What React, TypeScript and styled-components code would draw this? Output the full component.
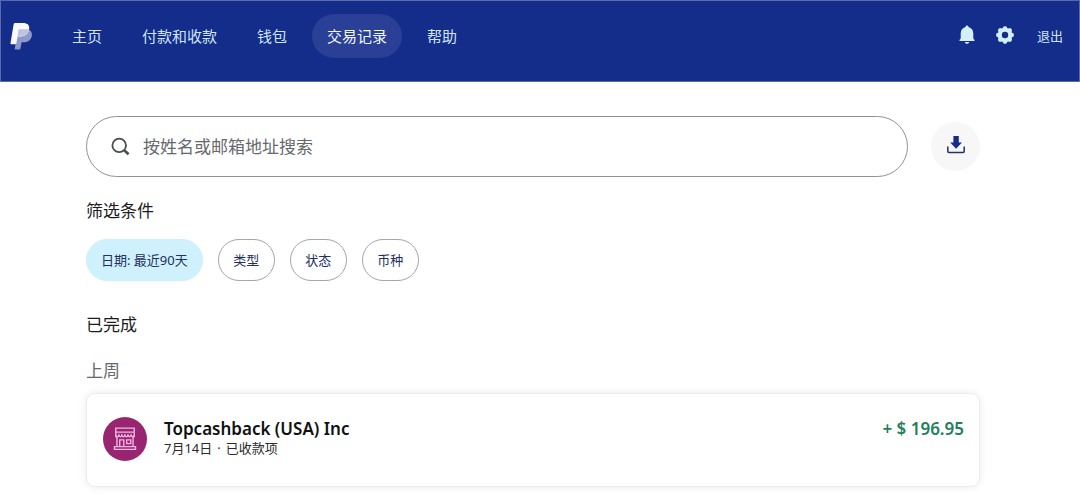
import React from "react";
import styled, { createGlobalStyle } from "styled-components";

const GlobalStyle = createGlobalStyle`
  *, *::before, *::after { box-sizing: border-box; }
  body {
    margin: 0;
    background: #fff;
    color: #1c1c1e;
    font-family: "Noto Sans", "Noto Sans CJK SC", sans-serif;
    font-size: 17px;
  }
  button, input { font: inherit; }
`;

const Header = styled.header`
  display: flex;
  align-items: flex-start;
  justify-content: space-between;
  height: 82px;
  padding: 13px 16px 0 9px;
  background: #142c8a;
  border: 1px solid #5a69aa;
`;

const HeaderGroup = styled.div`
  display: flex;
  align-items: center;
  height: 44px;
`;

const LogoLink = styled.a`
  display: flex;
  margin-right: 24px;
`;

const Nav = styled.nav`
  display: flex;
  gap: 10px;
`;

const NavLink = styled.a<{ $active?: boolean }>`
  padding: 0 15px;
  border-radius: 22px;
  background: ${(p) => (p.$active ? "#2a3f96" : "transparent")};
  color: ${(p) => (p.$active ? "#f2f8f4" : "#cfe6f6")};
  font-size: 15px;
  line-height: 44px;
  text-decoration: none;
  white-space: nowrap;
`;

const Actions = styled.div`
  display: flex;
  gap: 20px;
  margin-right: 23px;
  padding-bottom: 2px;
`;

const IconButton = styled.button`
  display: flex;
  align-items: center;
  padding: 0;
  border: 0;
  background: none;
  color: #d3effc;
  cursor: pointer;
`;

const LogoutLink = styled.a`
  color: #cfe6f6;
  font-size: 13px;
  line-height: 44px;
  text-decoration: none;
`;

const Main = styled.main`
  padding: 34px 100px 16px 86px;
`;

const SearchRow = styled.form`
  display: flex;
  align-items: center;
  gap: 23px;
`;

const SearchBox = styled.label`
  display: flex;
  flex: 1;
  align-items: center;
  gap: 12px;
  height: 61px;
  padding: 0 24px;
  border: 1px solid #909294;
  border-radius: 31px;
  color: #4a4d50;
`;

const SearchInput = styled.input`
  flex: 1;
  min-width: 0;
  padding: 0;
  border: 0;
  outline: 0;
  background: none;
  color: #333;
  font-size: 17px;
  &::placeholder { color: #66696c; opacity: 1; }
`;

const DownloadButton = styled.button`
  display: flex;
  align-items: center;
  justify-content: center;
  width: 49px;
  height: 49px;
  padding: 0 0 4px;
  border: 0;
  border-radius: 50%;
  background: #f7f7f8;
  color: #142c8a;
  cursor: pointer;
`;

const SectionTitle = styled.h2<{ $muted?: boolean }>`
  margin: 0;
  color: ${(p) => (p.$muted ? "#66696c" : "#1c1c1e")};
  font-size: 17px;
  font-weight: 400;
  line-height: 26px;
`;

const Filters = styled.section`
  padding-top: 21px;
`;

const Chips = styled.div`
  display: flex;
  gap: 15px;
  padding-top: 15px;
`;

const Chip = styled.button<{ $selected?: boolean }>`
  min-width: 57px;
  height: 42px;
  padding: 0 14px 2px;
  border: 1px solid ${(p) => (p.$selected ? "#cff0fd" : "#a3a6a9")};
  border-radius: 21px;
  background: ${(p) => (p.$selected ? "#cff0fd" : "#fff")};
  color: #23305c;
  font-size: 13px;
  white-space: nowrap;
  cursor: pointer;
`;

const Activity = styled.section`
  display: flex;
  flex-direction: column;
  gap: 20px;
  padding-top: 31px;
`;

const Card = styled.article`
  display: flex;
  gap: 17px;
  height: 94px;
  margin-top: -11px;
  padding: 23px 15px 0 16px;
  border: 1px solid #ececee;
  border-radius: 9px;
  box-shadow: 0 0 8px rgba(0, 0, 0, 0.08);
`;

const Avatar = styled.div`
  display: flex;
  align-items: center;
  justify-content: center;
  width: 44px;
  height: 44px;
  border-radius: 50%;
  background: #98256f;
`;

const Details = styled.div`
  flex: 1;
`;

const Name = styled.h3`
  margin: 0;
  color: #111;
  font-size: 17px;
  font-weight: 600;
  line-height: 23px;
`;

const Meta = styled.p`
  display: flex;
  gap: 5px;
  margin: 0;
  color: #2a2a2c;
  font-size: 13px;
  line-height: 17px;
`;

const Amount = styled.strong`
  color: #24805c;
  font-size: 17px;
  font-weight: 600;
  line-height: 23px;
`;

const Logo = () => (
  <svg width="23" height="28" viewBox="0 0 23 28" aria-hidden="true">
    <path d="M8.4 7.2h8.2c4 .3 6 3.2 5.200 6.800-.9 4.400-4 6.300-8 6.300h-2.200l-1.200 6.500q-.2.800-1 .8H5.300q-.8 0-.6-.8z" fill="#8d98cb" />
    <path d="M3.600 2.400Q3.800 1 5 1h7.900c4.600 0 7 2.200 6.200 6.400-.9 4.900-4.200 7-8.700 7H7.600l-1.200 6.900q-.1.900-.9.900H1.200q-.9 0-.7-.9z" fill="#f8faff" />
    <path d="M8.600 7.200h10.500c-.9 4.900-4.200 7-8.700 7H7.500z" fill="#bcc4e2" />
  </svg>
);

const Bell = () => (
  <svg width="18" height="20" viewBox="0 0 18 20" fill="currentColor" aria-hidden="true">
    <path d="M9 .6c.8 0 1.400.6 1.500 1.400 3 .8 4.800 3.300 4.800 6.500v4.600c0 .9.400 1.300 1.200 1.700v1.100h-15v-1.100c.8-.4 1.200-.8 1.200-1.700V8.500c0-3.200 1.800-5.700 4.800-6.500C7.600 1.200 8.200.6 9 .6zM6.800 17h4.400c-.2 1.100-1 1.800-2.200 1.800S7 18.100 6.800 17z" />
  </svg>
);

const Gear = () => (
  <svg width="18" height="18" viewBox="0 0 18 18" aria-hidden="true">
    <g fill="currentColor">
      <circle cx="9" cy="9" r="7.300" />
      {[0, 45, 90, 135, 180, 225, 270, 315].map((a) => (
        <path key={a} d="M6.500 2.500 7.600.4q1.400-.5 2.800 0l1.100 2.100z" transform={`rotate(${a} 9 9)`} />
      ))}
    </g>
    <circle cx="9" cy="9" r="3.200" fill="#142c8a" />
  </svg>
);

const SearchIcon = () => (
  <svg width="20" height="20" viewBox="0 0 20 20" fill="none" stroke="currentColor" aria-hidden="true">
    <circle cx="8.200" cy="8.400" r="6.800" strokeWidth="1.800" />
    <path d="m13.200 13.200 4.400 4.100" strokeWidth="2.600" />
  </svg>
);

const DownloadIcon = () => (
  <svg width="20" height="20" viewBox="0 0 20 20" aria-hidden="true">
    <path d="M7.400 1h5.400v6.500H16l-5.900 6.200-5.900-6.200h3.200z" fill="currentColor" />
    <path d="M1.800 11.600v4.700q0 1.200 1.200 1.200h14q1.200 0 1.200-1.200v-4.700" fill="none" stroke="#26305f" strokeWidth="1.500" />
  </svg>
);

const StoreIcon = () => (
  <svg width="24" height="24" viewBox="0 0 26 26" fill="none" stroke="#f3b4e6" strokeWidth="1.500" aria-hidden="true">
    <path d="M3 1.200h20v4.300H3zM3 5.500v5.500M23 5.500v5.500M4.300 10.500v10.700M21.700 10.500v10.700M1.600 21.200h22.800v3H1.600zM7.300 21.200v-7.200h4.400v7.200M14.800 14h4.400v4h-4.400z" />
    <path d="M3 8.700q1.700 4 3.400 0 1.600 4 3.300 0 1.600 4 3.300 0 1.700 4 3.300 0 1.700 4 3.300 0 1.700 4 3.400 0" />
  </svg>
);

const navItems = ["主页", "付款和收款", "钱包", "交易记录", "帮助"];
const filterItems = ["日期: 最近90天", "类型", "状态", "币种"];

export default function App() {
  return (
    <div lang="zh-CN">
      <GlobalStyle />
      <Header>
        <HeaderGroup>
          <LogoLink href="#" aria-label="PayPal">
            <Logo />
          </LogoLink>
          <Nav>
            {navItems.map((item) => (
              <NavLink key={item} href="#" $active={item === "交易记录"}>
                {item}
              </NavLink>
            ))}
          </Nav>
        </HeaderGroup>
        <HeaderGroup>
          <Actions>
            <IconButton type="button" aria-label="通知">
              <Bell />
            </IconButton>
            <IconButton type="button" aria-label="设置">
              <Gear />
            </IconButton>
          </Actions>
          <LogoutLink href="#">退出</LogoutLink>
        </HeaderGroup>
      </Header>
      <Main>
        <SearchRow onSubmit={(e) => e.preventDefault()}>
          <SearchBox>
            <SearchIcon />
            <SearchInput type="text" aria-label="搜索" placeholder="按姓名或邮箱地址搜索" />
          </SearchBox>
          <DownloadButton type="button" aria-label="下载">
            <DownloadIcon />
          </DownloadButton>
        </SearchRow>
        <Filters>
          <SectionTitle>筛选条件</SectionTitle>
          <Chips>
            {filterItems.map((item, i) => (
              <Chip key={item} type="button" $selected={i === 0}>
                {item}
              </Chip>
            ))}
          </Chips>
        </Filters>
        <Activity>
          <SectionTitle>已完成</SectionTitle>
          <SectionTitle $muted>上周</SectionTitle>
          <Card>
            <Avatar>
              <StoreIcon />
            </Avatar>
            <Details>
              <Name>Topcashback (USA) Inc</Name>
              <Meta>
                <span>7月14日</span>
                <span>·</span>
                <span>已收款项</span>
              </Meta>
            </Details>
            <Amount>+ $ 196.95</Amount>
          </Card>
        </Activity>
      </Main>
    </div>
  );
}
